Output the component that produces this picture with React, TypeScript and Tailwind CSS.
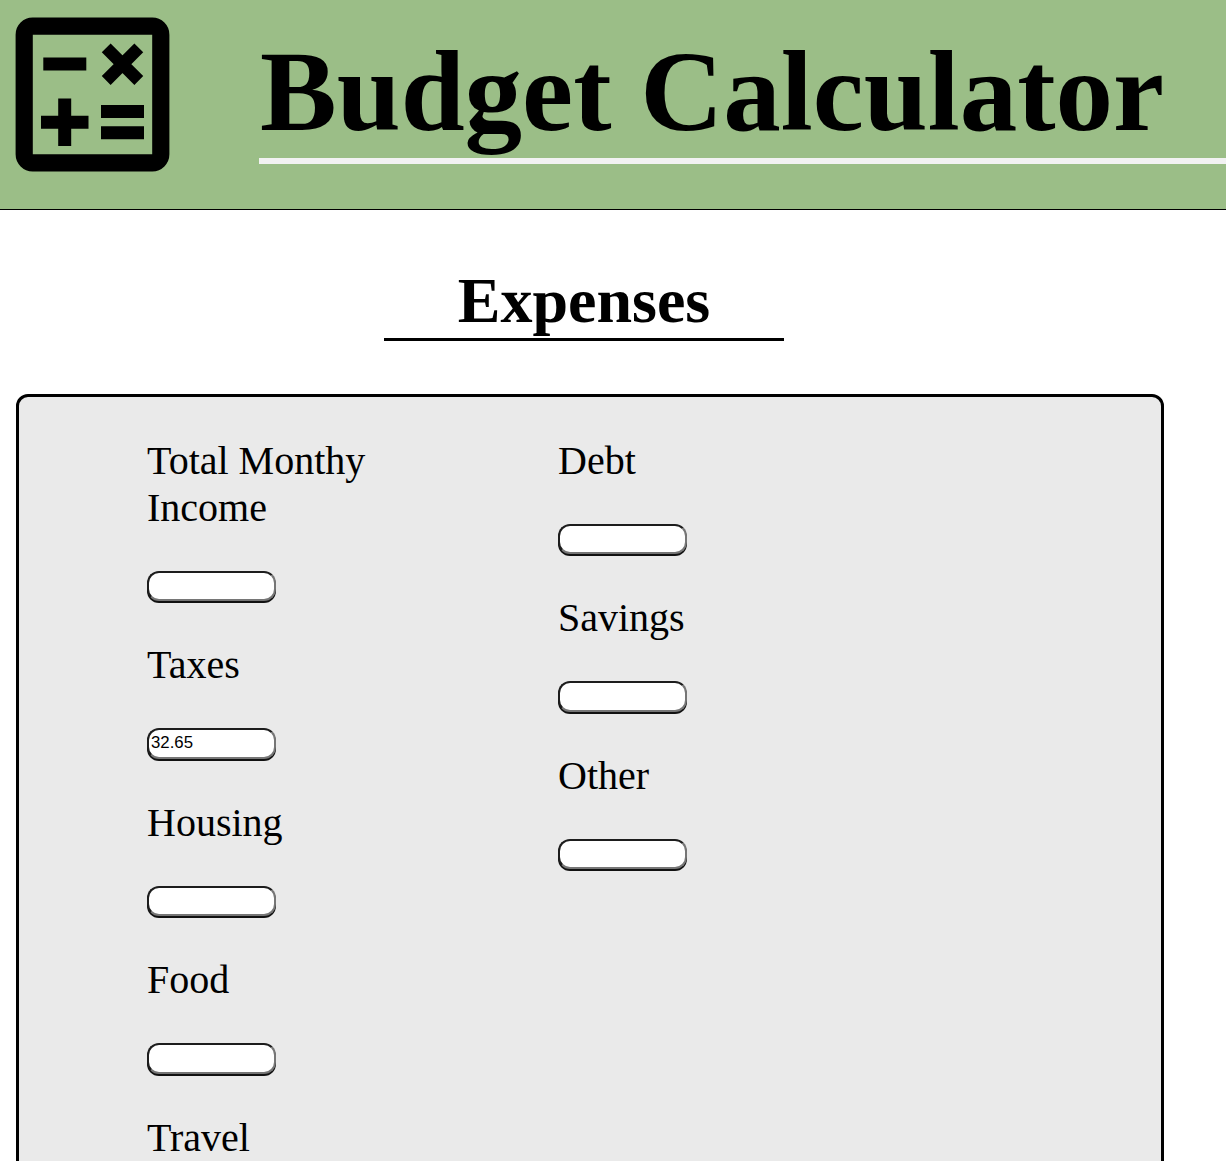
const fields = {
  left: [
    { label: 'Total Monthy Income', value: '' },
    { label: 'Taxes', value: '32.65' },
    { label: 'Housing', value: '' },
    { label: 'Food', value: '' },
    { label: 'Travel', value: '' },
  ],
  right: [
    { label: 'Debt', value: '' },
    { label: 'Savings', value: '' },
    { label: 'Other', value: '' },
  ],
};

type Item = { label: string; value: string };

function Column({ items }: { items: Item[] }) {
  return (
    <div className="flex w-[411px] flex-col">
      {items.map((f) => (
        <label key={f.label} className="mb-[40.1px] block">
          <span className="block w-[260px] text-[40px] leading-[47px]">{f.label}</span>
          <input
            type="text"
            defaultValue={f.value}
            className="mt-[39.8px] block h-[30.6px] w-[129px] rounded-[12px] border-2 border-t-[#1d1d1d] border-r-[#767676] border-b-[#767676] border-l-[#1d1d1d] bg-white px-[2px] pb-px font-['Liberation_Sans',sans-serif] text-[16.8px] leading-[20px] shadow-[0_2px_0_#111]"
          />
        </label>
      ))}
    </div>
  );
}

export default function App() {
  return (
    <div className="h-[1161px] w-full overflow-hidden bg-white font-['Liberation_Serif',serif] text-black">
      <header className="flex h-[210px] border-b border-black bg-[#9bbe87]">
        <svg className="mt-[17px] ml-[15px] shrink-0" width="155" height="155" viewBox="0 0 155 155">
          <rect x="9.200" y="9.200" width="136.600" height="136.600" rx="8.500" fill="none" stroke="#000" strokeWidth="17.2" />
          <path d="M28.300 47H71.300M26 105.300H73.500M49.700 81.500V129M86 94.500H129M86 115.800H129" stroke="#000" strokeWidth="13" />
          <path d="M91.200 30.900L123.800 63.500M123.800 30.900L91.200 63.500" stroke="#000" strokeWidth="12.500" />
        </svg>
        <h1 className="ml-[89px] h-[164px] grow border-b-[6px] border-[#f2f2f2] pt-[27px] pl-px text-[115px] leading-[130px] font-bold whitespace-nowrap">
          Budget Calculator
        </h1>
      </header>
      <h2 className="mt-[61px] ml-[384px] h-[70px] w-[400px] border-b-[3px] border-black text-center text-[64px] leading-[60px] font-bold">
        Expenses
      </h2>
      <main className="mt-[53px] ml-4 flex h-[900px] w-[1148px] rounded-[12px] border-[3px] border-black bg-[#eaeaea] pt-[39.8px] pl-[128px]">
        <Column items={fields.left} />
        <Column items={fields.right} />
      </main>
    </div>
  );
}
